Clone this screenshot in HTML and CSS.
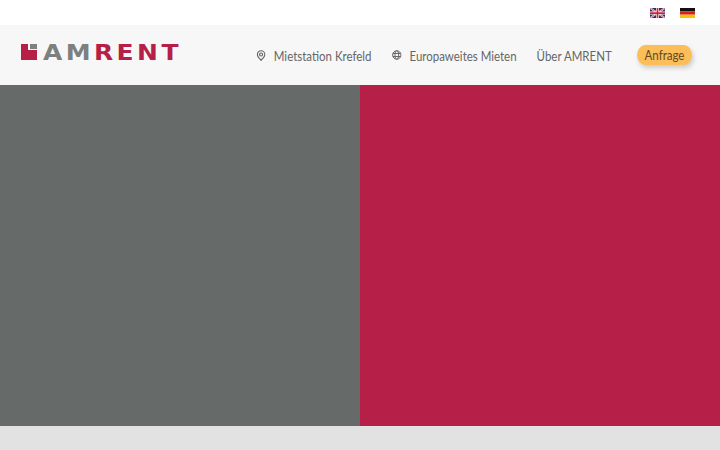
FILE: index.html
```html
<!DOCTYPE html>
<html lang="de">
  <head>
    <meta charset="UTF-8" />
    <meta name="viewport" content="width=device-width, initial-scale=1.0" />
    <title>AMRENT</title>
    <link rel="stylesheet" href="styles.css">
  </head>
  <body>
    <div class="sprachen">
      <a href="#" class="flagge" aria-label="English">
        <svg width="15" height="10" viewBox="0 0 60 40">
          <rect width="60" height="40" fill="#2b2f66" />
          <path d="M0 0L60 40M60 0L0 40" stroke="#fff" stroke-width="7" />
          <path d="M0 0L60 40M60 0L0 40" stroke="#c8283e" stroke-width="3" />
          <path d="M30 0V40M0 20H60" stroke="#fff" stroke-width="12" />
          <path d="M30 0V40M0 20H60" stroke="#c8283e" stroke-width="7" />
        </svg>
      </a>
      <a href="#" class="flagge" aria-label="Deutsch">
        <svg width="15" height="10" viewBox="0 0 15 10">
          <rect width="15" height="3.4" fill="#111" />
          <rect y="3.4" width="15" height="3.3" fill="#d6201f" />
          <rect y="6.7" width="15" height="3.3" fill="#f7c500" />
        </svg>
      </a>
    </div>
    <header>
      <a href="#" class="logo">
        <svg class="logo-mark" width="16" height="16" viewBox="0 0 16 16">
          <path d="M0 0H7V6H16V16H0Z" fill="#b51f48" />
          <rect x="9" y="0" width="7" height="5" fill="#7c807e" />
        </svg>
        <span class="logo-text"><span class="grau">AM</span>RENT</span>
      </a>
      <nav>
        <a href="#" class="nav-link">
          <svg width="11" height="11" viewBox="0 0 18 22" preserveAspectRatio="none" fill="none" stroke="#666" stroke-width="2.400">
            <path d="M9 20.500C5 16.500 1.500 13 1.500 9a7.500 7.500 0 0 1 15 0C16.500 13 13 16.500 9 20.500Z" />
            <circle cx="9" cy="9" r="3" />
          </svg>
          Mietstation Krefeld
        </a>
        <a href="#" class="nav-link">
          <svg width="12" height="10" viewBox="0 0 20 20" preserveAspectRatio="none" fill="none" stroke="#666" stroke-width="2">
            <circle cx="10" cy="10" r="8.500" />
            <ellipse cx="10" cy="10" rx="3.800" ry="8.500" />
            <path d="M2 7H18M2 13H18" />
          </svg>
          Europaweites Mieten
        </a>
        <a href="#" class="nav-link">Über AMRENT</a>
        <a href="#" class="anfrage">Anfrage</a>
      </nav>
    </header>
    <main class="kacheln">
      <div class="kachel grau-bg"></div>
      <div class="kachel rot-bg"></div>
    </main>
    <footer></footer>
  </body>
</html>
```

FILE: styles.css
```css
* {
  box-sizing: border-box;
}
html,
body {
  height: 100%;
}
body {
  margin: 0;
  display: flex;
  flex-direction: column;
  overflow: hidden;
  background-color: #fff;
  font-family: Lato, sans-serif;
}
a {
  color: inherit;
  text-decoration: none;
}
.sprachen {
  height: 25px;
  display: flex;
  justify-content: flex-end;
  align-items: center;
  gap: 15px;
  padding-right: 25px;
}
.flagge {
  display: flex;
}
header {
  height: 60px;
  background-color: #f7f7f7;
  display: flex;
  justify-content: space-between;
  align-items: flex-start;
  padding: 19px 28px 0 21px;
}
.logo {
  display: flex;
  align-items: center;
  gap: 6px;
  width: 100px;
  height: 16px;
  white-space: nowrap;
}
.logo-mark {
  flex: none;
}
.logo-text {
  display: inline-block;
  padding-top: 2px;
  font-family: "DejaVu Sans", sans-serif;
  font-weight: bold;
  font-size: 22px;
  line-height: 16px;
  letter-spacing: 3px;
  color: #b51f48;
  transform: scaleX(1.135);
  transform-origin: left;
}
.grau {
  color: #7c807e;
}
/* Lato squeezed to the width of the narrow font in the reference */
nav {
  display: flex;
  flex: none;
  align-items: center;
  gap: 24.400px;
  margin-top: 1px;
  font-size: 14px;
  color: #666;
  white-space: nowrap;
  transform: scaleX(0.82);
  transform-origin: right;
}
.nav-link {
  display: flex;
  align-items: center;
  gap: 10px;
  height: 20px;
}
.anfrage {
  width: 67px;
  height: 20px;
  margin-left: 6.500px;
  border-radius: 10px;
  background-color: #fcbe58;
  color: #5e4a25;
  line-height: 20px;
  text-align: center;
  box-shadow: 2px 3px 6px #0000002e;
}
.kacheln {
  height: 341px;
  display: grid;
  grid-template-columns: 1fr 1fr;
}
.grau-bg {
  background-color: #666a68;
}
.rot-bg {
  background-color: #b51f48;
}
footer {
  flex: 1;
  background-color: #e2e2e2;
}
```
